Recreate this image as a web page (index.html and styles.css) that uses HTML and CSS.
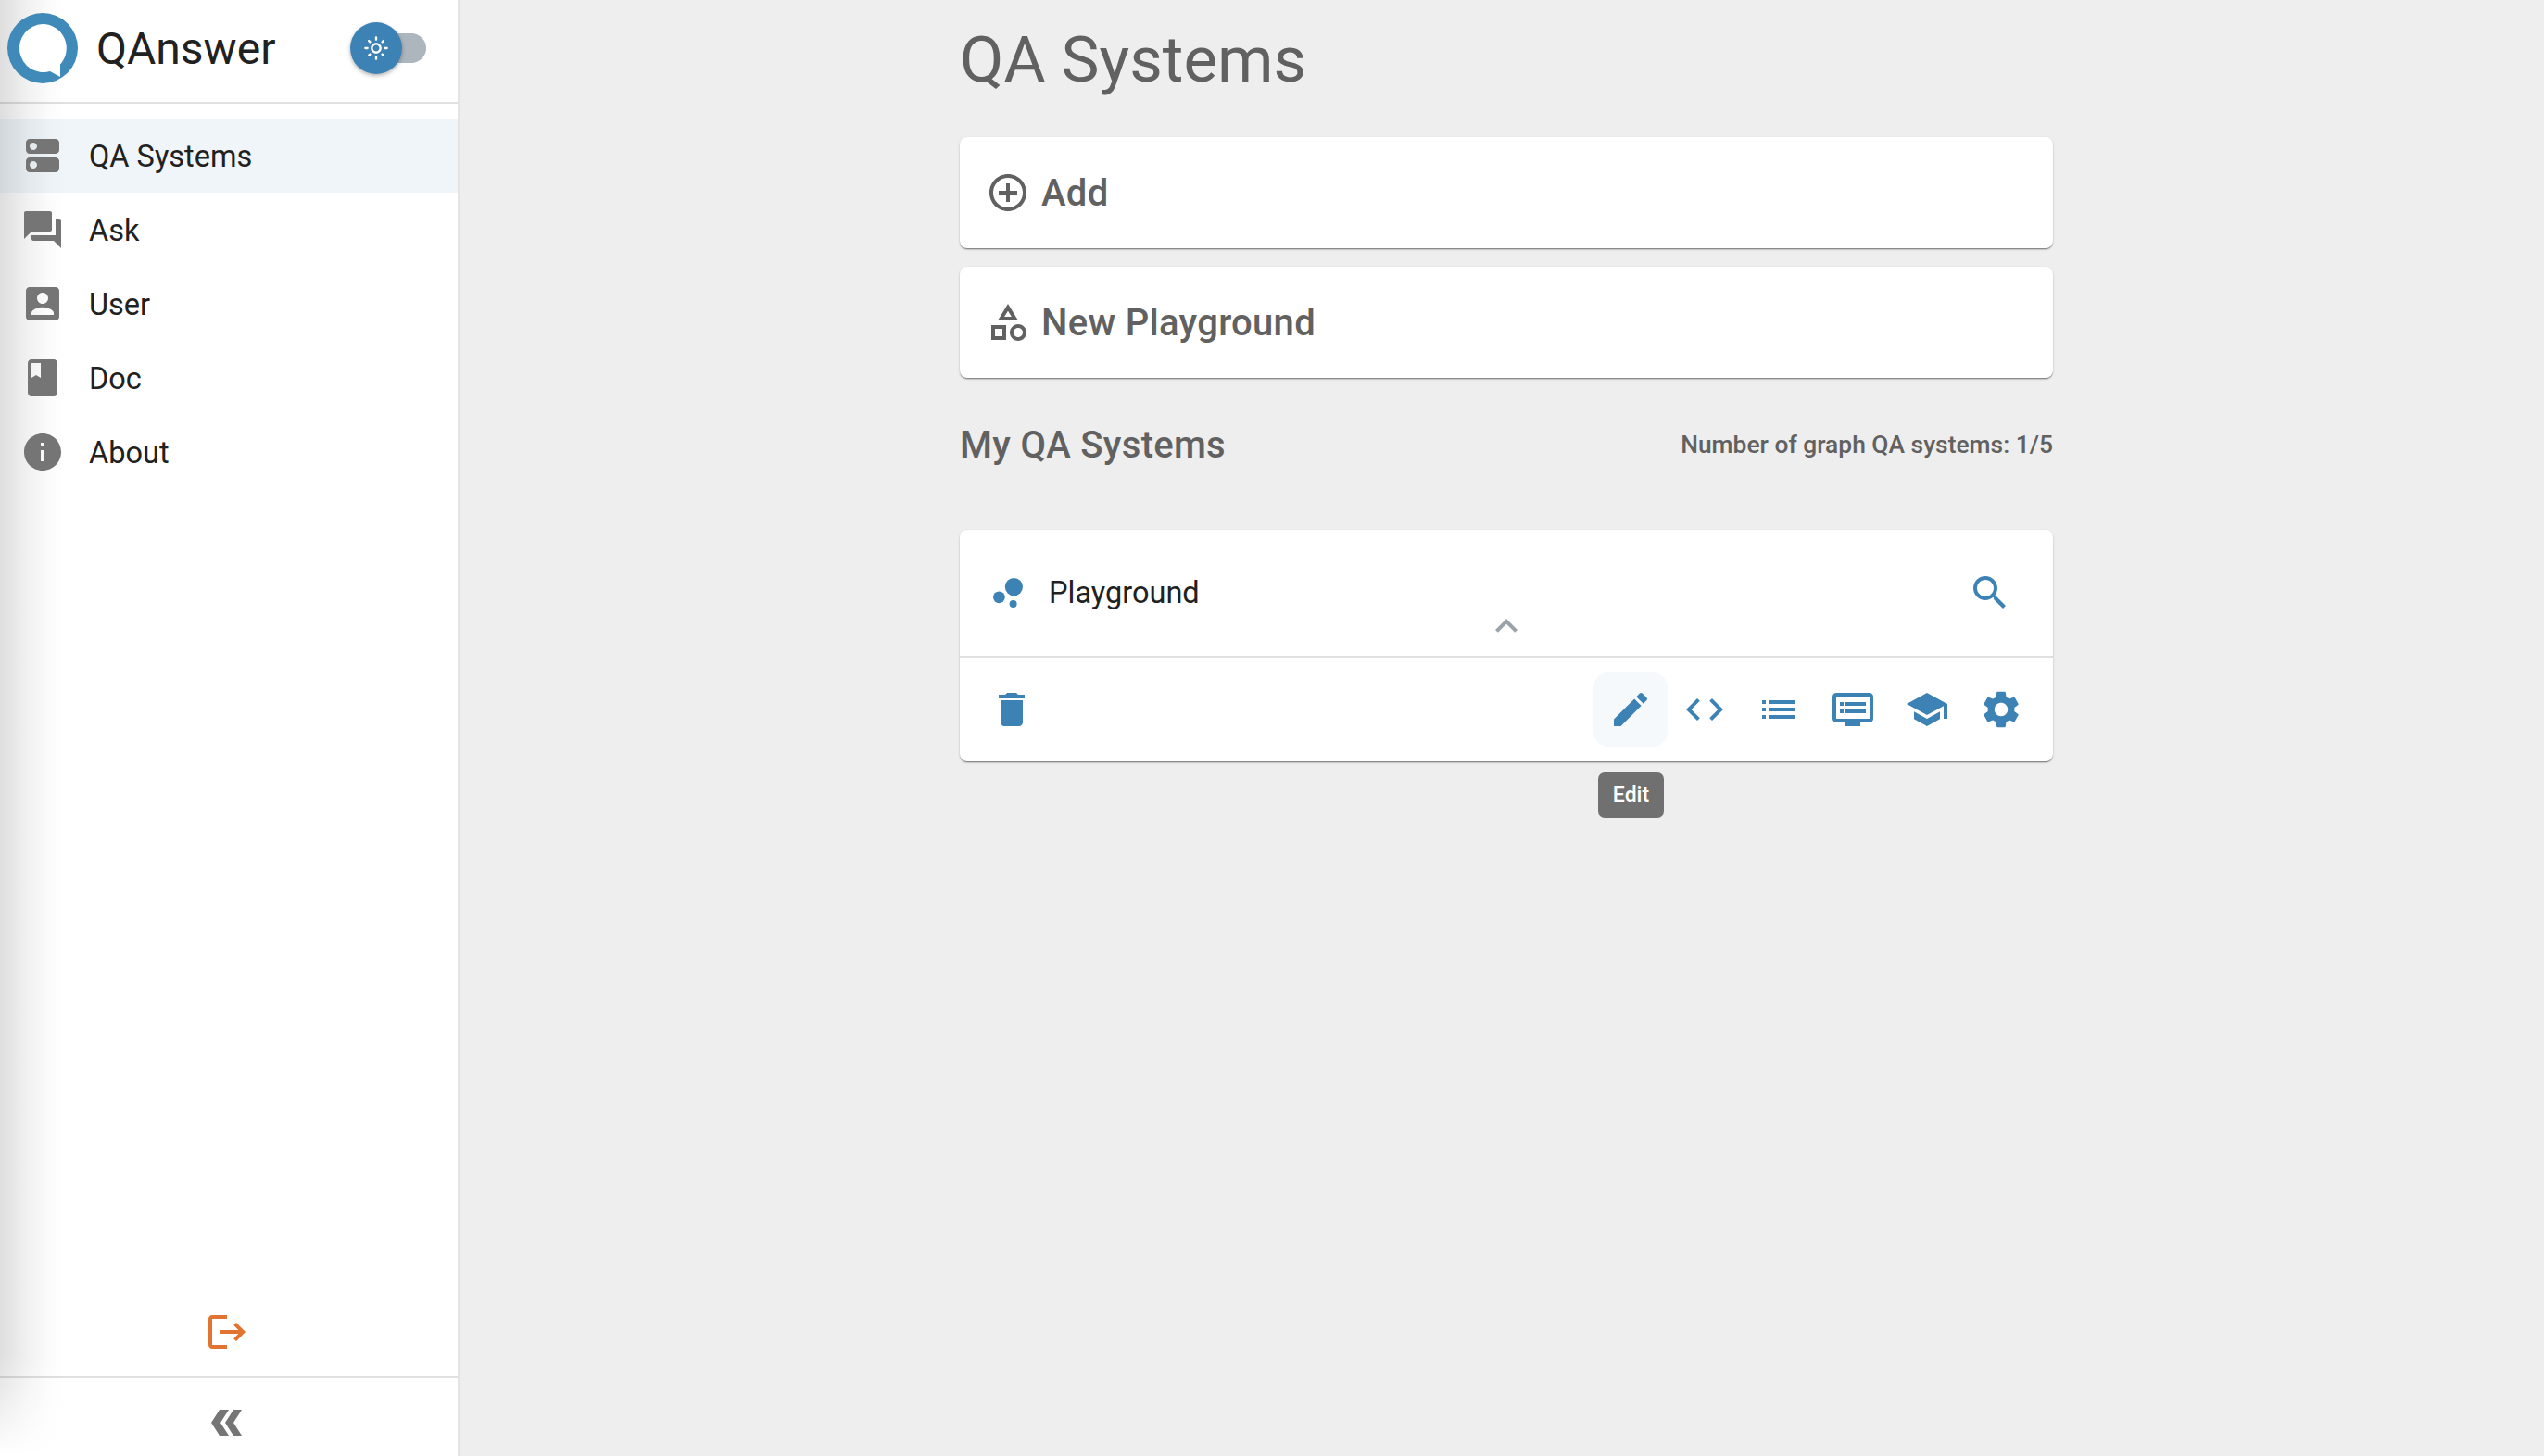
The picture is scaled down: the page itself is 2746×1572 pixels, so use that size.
FILE: index.html
```html
<!DOCTYPE html>
<html lang="en">
<head>
  <meta charset="UTF-8" />
  <title>QAnswer - QA Systems</title>
  <link rel="stylesheet" href="styles.css">
</head>
<body>
<div class="app">
  <!-- SIDEBAR -->
  <aside class="sidebar">
    <div class="brand">
      <svg class="logo" viewBox="0 0 76 76">
        <circle cx="38" cy="38" r="38" fill="#3f8ab9"/>
        <path fill="#fff" d="M38 12a26 26 0 0 1 19 43.500v13.500l-11-6a26 26 0 1 1-8-51z"/>
      </svg>
      <span class="brand-name">QAnswer</span>
      <span class="toggle">
        <span class="toggle-thumb">
          <svg class="sun" viewBox="0 0 24 24"><path d="M12 9c1.650 0 3 1.350 3 3s-1.350 3-3 3-3-1.350-3-3 1.350-3 3-3m0-2c-2.760 0-5 2.240-5 5s2.240 5 5 5 5-2.240 5-5-2.240-5-5-5zM2 13h2c.55 0 1-.45 1-1s-.45-1-1-1H2c-.55 0-1 .45-1 1s.45 1 1 1zm18 0h2c.55 0 1-.45 1-1s-.45-1-1-1h-2c-.55 0-1 .45-1 1s.45 1 1 1zM11 2v2c0 .55.45 1 1 1s1-.45 1-1V2c0-.55-.45-1-1-1s-1 .45-1 1zm0 18v2c0 .55.45 1 1 1s1-.45 1-1v-2c0-.55-.45-1-1-1s-1 .45-1 1zM5.990 4.580c-.39-.39-1.030-.39-1.410 0-.39.39-.39 1.030 0 1.410l1.060 1.060c.39.39 1.030.39 1.410 0s.39-1.030 0-1.410L5.990 4.580zm12.370 12.370c-.39-.39-1.030-.39-1.410 0-.39.39-.39 1.030 0 1.410l1.060 1.060c.39.39 1.030.39 1.410 0 .39-.39.39-1.030 0-1.410l-1.060-1.060zm1.060-10.960c.39-.39.39-1.030 0-1.410-.39-.39-1.030-.39-1.410 0l-1.060 1.060c-.39.39-.39 1.030 0 1.410s1.030.39 1.410 0l1.060-1.060zM7.050 18.360c.39-.39.39-1.030 0-1.410-.39-.39-1.030-.39-1.410 0l-1.060 1.060c-.39.39-.39 1.030 0 1.410s1.030.39 1.410 0l1.060-1.060z"/></svg>
        </span>
      </span>
    </div>

    <nav class="menu">
      <a class="menu-item active">
        <svg class="icon" viewBox="0 0 24 24"><path d="M19 13H5c-1.100 0-2 .9-2 2v4c0 1.100.9 2 2 2h14c1.100 0 2-.9 2-2v-4c0-1.100-.9-2-2-2zM7 19c-1.100 0-2-.9-2-2s.9-2 2-2 2 .9 2 2-.9 2-2 2zM19 3H5c-1.100 0-2 .9-2 2v4c0 1.100.9 2 2 2h14c1.100 0 2-.9 2-2V5c0-1.100-.9-2-2-2zM7 9c-1.100 0-2-.9-2-2s.9-2 2-2 2 .9 2 2-.9 2-2 2z"/></svg>
        QA Systems
      </a>
      <a class="menu-item">
        <svg class="icon" viewBox="0 0 24 24"><path d="M21 6h-2v9H6v2c0 .55.45 1 1 1h11l4 4V7c0-.55-.45-1-1-1zm-4 6V3c0-.55-.45-1-1-1H3c-.55 0-1 .45-1 1v14l4-4h10c.55 0 1-.45 1-1z"/></svg>
        Ask
      </a>
      <a class="menu-item">
        <svg class="icon" viewBox="0 0 24 24"><path d="M3 5v14c0 1.100.89 2 2 2h14c1.100 0 2-.9 2-2V5c0-1.100-.9-2-2-2H5c-1.110 0-2 .9-2 2zm12 4c0 1.660-1.340 3-3 3s-3-1.340-3-3 1.340-3 3-3 3 1.340 3 3zm-9 8c0-2 4-3.100 6-3.100s6 1.100 6 3.100v1H6v-1z"/></svg>
        User
      </a>
      <a class="menu-item">
        <svg class="icon" viewBox="0 0 24 24"><path d="M18 2H6c-1.100 0-2 .9-2 2v16c0 1.100.9 2 2 2h12c1.100 0 2-.9 2-2V4c0-1.100-.9-2-2-2zM6 4h5v8l-2.500-1.500L6 12V4z"/></svg>
        Doc
      </a>
      <a class="menu-item">
        <svg class="icon" viewBox="0 0 24 24"><path d="M12 2C6.480 2 2 6.480 2 12s4.480 10 10 10 10-4.480 10-10S17.520 2 12 2zm1 15h-2v-6h2v6zm0-8h-2V7h2v2z"/></svg>
        About
      </a>
    </nav>

    <div class="logout">
      <svg class="icon" viewBox="0 0 24 24"><path d="M17 7l-1.410 1.410L18.170 11H8v2h10.170l-2.580 2.580L17 17l5-5zM4 5h8V3H4c-1.100 0-2 .9-2 2v14c0 1.100.9 2 2 2h8v-2H4V5z"/></svg>
    </div>
    <div class="collapse">
      <svg class="chevrons" viewBox="0 0 34 28"><path d="M19 0H9L0 14l9 14h10L10 14zM33 0H24L15 14l9 14h9L24 14z"/></svg>
    </div>
  </aside>

  <!-- MAIN -->
  <main class="content">
    <h1 class="page-title">QA Systems</h1>

    <div class="card action-card">
      <svg class="icon" viewBox="0 0 24 24"><path d="M13 7h-2v4H7v2h4v4h2v-4h4v-2h-4V7zm-1-5C6.480 2 2 6.480 2 12s4.480 10 10 10 10-4.480 10-10S17.520 2 12 2zm0 18c-4.410 0-8-3.590-8-8s3.590-8 8-8 8 3.590 8 8-3.590 8-8 8z"/></svg>
      Add
    </div>
    <div class="card action-card">
      <svg class="icon" viewBox="0 0 24 24"><path d="M12 2l-5.500 9h11L12 2zm0 3.840L13.930 9h-3.870L12 5.840zM17.500 13c-2.490 0-4.500 2.010-4.500 4.500s2.010 4.500 4.500 4.500 4.500-2.010 4.500-4.500-2.010-4.500-4.500-4.500zm0 7c-1.380 0-2.500-1.120-2.500-2.500s1.120-2.500 2.500-2.500 2.500 1.120 2.500 2.500-1.120 2.500-2.500 2.500zM3 21.500h8v-8H3v8zm2-6h4v4H5v-4z"/></svg>
      New Playground
    </div>

    <div class="section-head">
      <h2>My QA Systems</h2>
      <span class="count">Number of graph QA systems: 1/5</span>
    </div>

    <div class="card system">
      <div class="system-top">
        <svg class="icon blue" viewBox="0 0 24 24"><circle cx="7.200" cy="14.400" r="3.200"/><circle cx="14.800" cy="18" r="2"/><circle cx="15.200" cy="8.800" r="4.800"/></svg>
        <span class="system-name">Playground</span>
        <svg class="icon blue" viewBox="0 0 24 24"><path d="M15.500 14h-.79l-.28-.27C15.410 12.590 16 11.110 16 9.500 16 5.910 13.090 3 9.500 3S3 5.910 3 9.500 5.910 16 9.500 16c1.610 0 3.090-.59 4.230-1.570l.27.28v.79l5 4.990L20.490 19l-4.990-5zm-6 0C7.010 14 5 11.990 5 9.500S7.010 5 9.500 5 14 7.010 14 9.500 11.990 14 9.500 14z"/></svg>
        <svg class="icon expand" viewBox="0 0 24 24"><path d="M12 8l-6 6 1.410 1.410L12 10.830l4.590 4.580L18 14z"/></svg>
      </div>
      <div class="system-actions">
        <button class="icon-btn">
          <svg class="icon blue" viewBox="0 0 24 24"><path d="M6 19c0 1.100.9 2 2 2h8c1.100 0 2-.9 2-2V7H6v12zM19 4h-3.500l-1-1h-5l-1 1H5v2h14V4z"/></svg>
        </button>
        <div class="action-group">
          <button class="icon-btn hover">
            <svg class="icon blue" viewBox="0 0 24 24"><path d="M3 17.250V21h3.750L17.810 9.940l-3.750-3.750L3 17.250zM20.710 7.040c.39-.39.39-1.020 0-1.410l-2.340-2.340c-.39-.39-1.020-.39-1.410 0l-1.830 1.830 3.750 3.750 1.830-1.830z"/></svg>
            <span class="tooltip">Edit</span>
          </button>
          <button class="icon-btn">
            <svg class="icon blue" viewBox="0 0 24 24"><path d="M9.400 16.600L4.800 12l4.600-4.600L8 6l-6 6 6 6 1.400-1.400zm5.200 0l4.600-4.600-4.600-4.600L16 6l6 6-6 6-1.400-1.400z"/></svg>
          </button>
          <button class="icon-btn">
            <svg class="icon blue" viewBox="0 0 24 24"><path d="M3 13h2v-2H3v2zm0 4h2v-2H3v2zm0-8h2V7H3v2zm4 4h14v-2H7v2zm0 4h14v-2H7v2zM7 7v2h14V7H7z"/></svg>
          </button>
          <button class="icon-btn">
            <svg class="icon blue" viewBox="0 0 24 24"><path d="M21 3H3c-1.100 0-2 .9-2 2v12c0 1.100.9 2 2 2h5v2h8v-2h5c1.100 0 1.990-.9 1.990-2L23 5c0-1.100-.9-2-2-2zm0 14H3V5h18v12zm-2-9H8v2h11V8zm0 4H8v2h11v-2zM7 8H5v2h2V8zm0 4H5v2h2v-2z"/></svg>
          </button>
          <button class="icon-btn">
            <svg class="icon blue" viewBox="0 0 24 24"><path d="M5 13.180v4L12 21l7-3.820v-4L12 17l-7-3.820zM12 3L1 9l11 6 9-4.910V17h2V9L12 3z"/></svg>
          </button>
          <button class="icon-btn">
            <svg class="icon blue" viewBox="0 0 24 24"><path d="M19.140 12.940c.04-.3.06-.61.06-.94 0-.32-.02-.64-.07-.94l2.030-1.580c.18-.14.23-.41.12-.61l-1.920-3.320c-.12-.22-.37-.29-.59-.22l-2.390.96c-.5-.38-1.030-.7-1.620-.94L14.400 2.810c-.04-.24-.24-.41-.48-.41h-3.840c-.24 0-.43.17-.47.41L9.250 5.350c-.59.24-1.130.57-1.620.94l-2.390-.96c-.22-.08-.47 0-.59.22L2.740 8.870c-.12.21-.08.47.12.61l2.030 1.580c-.05.3-.09.63-.09.94s.02.64.07.94l-2.030 1.580c-.18.14-.23.41-.12.61l1.920 3.320c.12.22.37.29.59.22l2.390-.96c.5.38 1.030.7 1.620.94l.36 2.540c.05.24.24.41.48.41h3.840c.24 0 .44-.17.47-.41l.36-2.540c.59-.24 1.130-.56 1.620-.94l2.390.96c.22.08.47 0 .59-.22l1.920-3.320c.12-.22.07-.47-.12-.61l-2.010-1.580zM12 15.600c-1.980 0-3.600-1.620-3.600-3.600s1.620-3.600 3.600-3.600 3.600 1.620 3.600 3.600-1.620 3.600-3.600 3.600z"/></svg>
          </button>
        </div>
      </div>
    </div>
  </main>
</div>
</body>
</html>
```

FILE: styles.css
```css
:root { --blue:#3d82b5; --grey:#757575; --text:#212121; --muted:#616161; --line:rgba(0,0,0,.12); }
*{box-sizing:border-box;font-family:Roboto,"Liberation Sans",sans-serif}
html,body{margin:0;height:100%}
body{background:#eee;color:var(--text);overflow:hidden}
.app{display:flex;height:100vh}

/* sidebar */
.sidebar{width:496px;flex:none;display:flex;flex-direction:column;border-right:2px solid #e4e4e4;
  background:linear-gradient(0deg,#fff,rgba(255,255,255,0) 110px),linear-gradient(90deg,#dedede,#f1f1f1 30px,#fbfbfb 52px,#fff 70px)}
.brand{height:112px;flex:none;display:flex;align-items:center;padding:0 34px 6px 8px;border-bottom:2px solid var(--line)}
.logo{width:76px;height:76px;flex:none}
.brand-name{margin-left:20px;font-size:48px}
.toggle{position:relative;margin-left:auto;width:68px;height:32px;border-radius:16px;background:#adb5bd}
.toggle-thumb{position:absolute;left:-14px;top:-12px;width:56px;height:56px;border-radius:50%;background:var(--blue);
  display:flex;align-items:center;justify-content:center;box-shadow:0 2px 4px rgba(0,0,0,.3)}
.sun{width:28px;height:28px;fill:#fff}
.menu{flex:1;padding-top:16px}
.menu-item{display:flex;align-items:center;gap:26px;height:80px;padding:2px 0 0 22px;font-size:32.5px}
.menu-item .icon{margin-bottom:2px}
.menu-item.active{background:rgba(60,130,180,.08)}
.icon{width:48px;height:48px;flex:none;fill:var(--grey)}
.logout{height:74px;flex:none;display:flex;justify-content:center;align-items:flex-start;padding-right:4px;border-bottom:2px solid var(--line)}
.logout .icon{fill:#e07430}
.collapse{height:84px;flex:none;display:flex;justify-content:center;align-items:center;padding:12px 4px 0 0}
.chevrons{width:34px;height:28px;fill:var(--grey)}

/* main */
.content{flex:1;padding-left:540px;color:var(--muted)}
.content>*{width:1180px}
.page-title{margin:0 0 20px;font-size:69px;font-weight:400;line-height:128px;padding-top:1px;height:128px}
.card{background:#fff;border-radius:8px;box-shadow:0 2px 2px -1px rgba(0,0,0,.38),0 1px 1px 0 rgba(0,0,0,.14),0 1px 3px 0 rgba(0,0,0,.12)}
.action-card{display:flex;align-items:center;gap:12px;height:120px;margin-bottom:20px;padding-left:28px;font-size:40px;font-weight:500;letter-spacing:.3px}
.action-card .icon{fill:var(--muted)}
.section-head{display:flex;justify-content:space-between;align-items:center;height:104px;margin-bottom:40px}
.section-head h2{margin:0;font-size:40px;font-weight:500;letter-spacing:.3px}
.count{font-size:26.4px;font-weight:500}
.blue{fill:var(--blue)}
.system-top{position:relative;display:flex;align-items:flex-start;height:138px;padding:44px 44px 0 28px;border-bottom:2px solid var(--line)}
.system-name{margin-left:20px;flex:1;font-size:32.5px;line-height:48px;color:var(--text)}
.expand{position:absolute;left:566px;bottom:8px;fill:#9aa3aa}
.system-actions{display:flex;justify-content:space-between;height:112px;padding:16px}
.action-group{display:flex}
.icon-btn{position:relative;width:80px;height:80px;padding:0;border:0;border-radius:16px;background:none;display:flex;align-items:center;justify-content:center}
.icon-btn.hover{background:#f5f9fc}
.tooltip{position:absolute;left:5px;top:108px;width:71px;height:49px;border-radius:7px;background:#707070;color:#fff;
  font-size:23px;font-weight:500;line-height:49px;text-align:center}
```
